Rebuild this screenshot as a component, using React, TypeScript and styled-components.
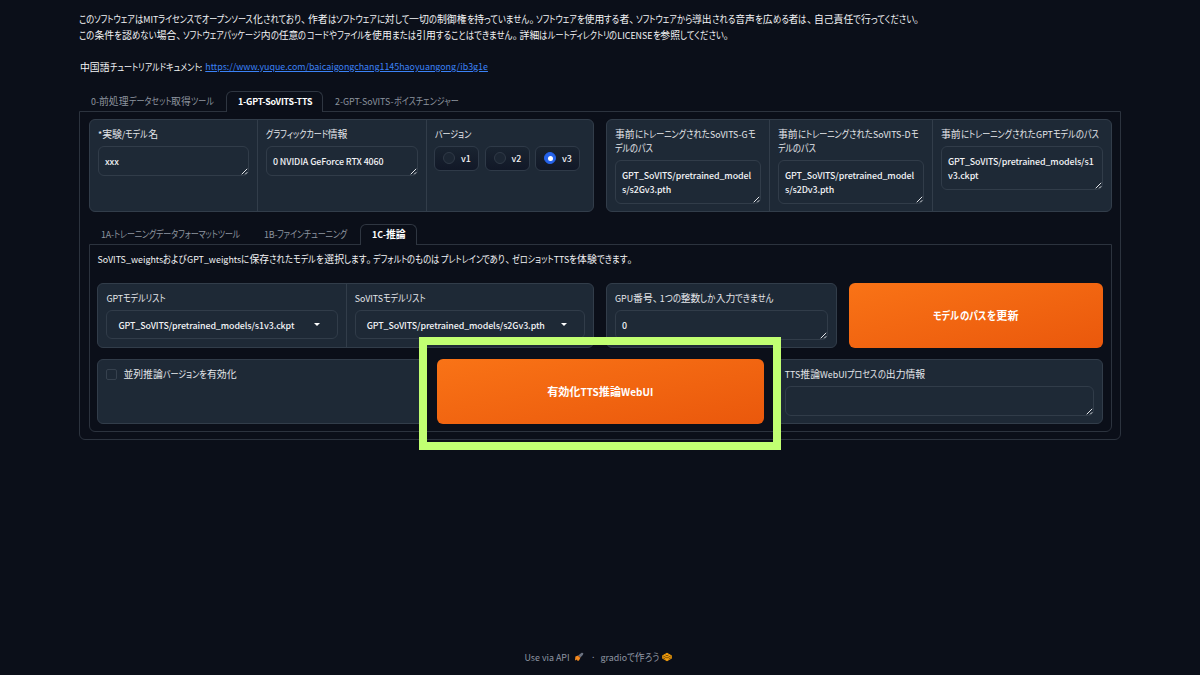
import React from "react";
import styled, { createGlobalStyle, css } from "styled-components";

const GlobalStyle = createGlobalStyle`
  *, *::before, *::after { box-sizing: border-box; }
  html, body { margin: 0; background: #0b0f19; }
  body {
    font-family: "Noto Sans CJK JP", "Liberation Sans", sans-serif;
    font-size: 9.85px;
    color: #f3f4f6;
  }
`;

/* ---------- mixed-script text ---------- */

type Script = "latin" | "hiragana" | "katakana" | "mark" | "kanji";

const KANA_WIDTH = { hiragana: 0.85, katakana: 0.815 };

const condensed = (scale: number) => css<{ $count: number }>`
  display: inline-block;
  font-feature-settings: "palt";
  transform: scaleX(${scale});
  transform-origin: 0 50%;
  margin-right: ${(p) => -(p.$count * (1 - scale) * 0.885).toFixed(3)}em;
`;

const Run = styled.span<{ $script: Script; $count: number }>`
  line-height: 1;
  ${(p) => p.$script === "latin" && "font-size: 0.9em;"}
  ${(p) => p.$script === "mark" && "letter-spacing: -0.3em;"}
  ${(p) => p.$script === "hiragana" && condensed(KANA_WIDTH.hiragana)}
  ${(p) => p.$script === "katakana" && condensed(KANA_WIDTH.katakana)}
`;

const scriptOf = (ch: string): Script => {
  if (/[\u0000-\u00ff]/.test(ch)) return "latin";
  if (/[\u3000-\u303f]/.test(ch)) return "mark";
  if (/[\u3040-\u309f]/.test(ch)) return "hiragana";
  if (/[\u30a0-\u30ff]/.test(ch)) return "katakana";
  return "kanji";
};

const Line = styled.span`
  display: block;
  height: 1lh;
  white-space: pre;
`;

function Runs({ children }: { children: string }) {
  const runs: { script: Script; text: string }[] = [];
  for (const ch of children) {
    const script = scriptOf(ch);
    const last = runs[runs.length - 1];
    if (last && last.script === script) last.text += ch;
    else runs.push({ script, text: ch });
  }
  return (
    <>
      {runs.map((r, i) => (
        <Run key={i} $script={r.script} $count={r.text.length}>
          {r.text}
        </Run>
      ))}
    </>
  );
}

function Text({ children }: { children: string }) {
  return (
    <>
      {children.split("\n").map((l, i) => (
        <Line key={i}>
          <Runs>{l}</Runs>
        </Line>
      ))}
    </>
  );
}

/* ---------- page ---------- */

const Page = styled.main`
  position: relative;
  display: flex;
  flex-direction: column;
  width: 1200px;
  height: 675px;
  padding: 11px 79px 0;
  overflow: hidden;
`;

const Prose = styled.div`
  line-height: 16px;
`;

const Paragraph = styled.p`
  display: flex;
  margin: 16px 0 0 1px;
  gap: 3px;
`;

const DocLink = styled.a`
  font-size: 8.88px;
  color: #3b82f6;
  text-decoration: underline;
`;

const TabBar = styled.div<{ $top: number }>`
  display: flex;
  height: 20px;
  margin-top: ${(p) => p.$top}px;
`;

const Tab = styled.button<{ $width: number; $active?: boolean; $tracking?: number }>`
  width: ${(p) => p.$width}px;
  height: 21px;
  padding: 0 0 2px 11px;
  border: 1px solid transparent;
  border-bottom: 0;
  border-radius: 6px 6px 0 0;
  background: none;
  color: #8d949f;
  font: inherit;
  line-height: 18px;
  letter-spacing: ${(p) => p.$tracking ?? 0}px;
  text-align: left;
  ${(p) =>
    p.$active &&
    css`
      position: relative;
      background: #0b0f19;
      border-color: #2f3641;
      color: #fff;
      font-weight: 700;
    `}
`;

const Panel = styled.section<{ $left: number; $right: number }>`
  border: 1px solid #2c333e;
  border-radius: 0 0 6px 6px;
  padding: 7px ${(p) => p.$right}px 7px ${(p) => p.$left}px;
`;

const Row = styled.div<{ $columns: string; $height: number; $top?: number }>`
  display: grid;
  grid-template-columns: ${(p) => p.$columns};
  column-gap: 12px;
  height: ${(p) => p.$height}px;
  margin-top: ${(p) => p.$top ?? 0}px;
`;

const Group = styled.div<{ $columns?: string }>`
  display: grid;
  grid-template-columns: ${(p) => p.$columns ?? "1fr"};
  border: 1px solid #323d4a;
  border-radius: 6px;
  background: #1e2936;
  overflow: hidden;
`;

const Cell = styled.div`
  min-width: 0;
  padding: 7px 8px 0;
  & + & {
    border-left: 1px solid #323d4a;
  }
`;

const Label = styled.div`
  margin-bottom: 5px;
  line-height: 14px;
  color: #e5e7eb;
`;

const Area = styled.div<{ $lines?: number }>`
  position: relative;
  height: ${(p) => 16 + 14 * (p.$lines ?? 1)}px;
  padding: 6.5px 6px;
  border: 1px solid #313c49;
  border-radius: 6px;
  line-height: 14px;
  font-weight: 500;
  letter-spacing: -0.09px;
`;

const Grip = styled.svg`
  position: absolute;
  right: 0;
  bottom: 0;
  width: 7px;
  height: 7px;
`;

function TextArea({ value = "" }: { value?: string }) {
  return (
    <Area $lines={value.split("\n").length}>
      <Text>{value}</Text>
      <Grip viewBox="0 0 7 7" fill="none" stroke="#e5e7eb" strokeWidth="1">
        <path d="M0.7 6.3 L6.2 0.8 M4.2 6.3 L6.2 4.3" />
      </Grip>
    </Area>
  );
}

function Field({ label, value }: { label: string; value?: string }) {
  return (
    <Cell>
      <Label>
        <Text>{label}</Text>
      </Label>
      <TextArea value={value} />
    </Cell>
  );
}

const Select = styled.div`
  display: flex;
  align-items: center;
  justify-content: space-between;
  height: 29px;
  padding: 0 17px 0 11px;
  border: 1px solid #313c49;
  border-radius: 6px;
  line-height: 14px;
  font-weight: 500;
  letter-spacing: -0.09px;
`;

function Dropdown({ label, value }: { label: string; value: string }) {
  return (
    <Cell>
      <Label>
        <Text>{label}</Text>
      </Label>
      <Select>
        <Text>{value}</Text>
        <svg width="6" height="3" viewBox="0 0 6 3">
          <path d="M0 0h6L3 3z" fill="#fff" />
        </svg>
      </Select>
    </Cell>
  );
}

const RadioList = styled.div`
  display: flex;
  gap: 5.5px;
  margin-left: -1px;
`;

const RadioOption = styled.label`
  display: flex;
  align-items: center;
  gap: 6px;
  width: 45px;
  height: 25px;
  padding: 0 0 1px 8px;
  border: 1px solid #2f3a48;
  border-radius: 6px;
  background: linear-gradient(to bottom, #1a2431, #111827);
  line-height: 14px;
  font-weight: 500;
`;

const RadioDot = styled.span<{ $on: boolean }>`
  display: grid;
  place-items: center;
  width: 12px;
  height: 12px;
  border: 1px solid ${(p) => (p.$on ? "#2563eb" : "#303a47")};
  border-radius: 50%;
  background: ${(p) => (p.$on ? "#2563eb" : "#1c2633")};
  &::after {
    content: "";
    width: 5px;
    height: 5px;
    border-radius: 50%;
    background: ${(p) => (p.$on ? "#fff" : "transparent")};
  }
`;

const CheckRow = styled.label`
  display: flex;
  align-items: center;
  gap: 6px;
  height: 14px;
  line-height: 14px;
  color: #e5e7eb;
`;

const CheckBox = styled.span`
  width: 11px;
  height: 11px;
  border: 1px solid #36414e;
  border-radius: 2px;
  background: #1e2936;
`;

const PrimaryButton = styled.button`
  display: flex;
  align-items: center;
  justify-content: center;
  padding: 0 0 2px;
  border: 0;
  border-radius: 6px;
  background: linear-gradient(to bottom right, #f97316, #ea580c);
  color: #fff;
  font: inherit;
  font-size: 11.1px;
  font-weight: 700;
  line-height: 16px;
`;

const Note = styled.div`
  line-height: 15px;
  letter-spacing: 0.03px;
`;

const Highlight = styled.div`
  position: absolute;
  left: 419px;
  top: 337px;
  width: 362px;
  height: 113px;
  border: 8px solid #c1ff72;
`;

const Footer = styled.footer`
  display: flex;
  align-items: center;
  height: 16px;
  margin: auto 0 10px 445.5px;
  line-height: 16px;
  color: #8f96a3;
`;

const RocketIcon = styled.svg`
  width: 10px;
  height: 10px;
  margin-left: 4px;
`;

const Dot = styled.span`
  margin: 0 4.5px 0 7px;
`;

const LogoIcon = styled.svg`
  width: 10px;
  height: 10px;
  margin-left: 3px;
`;

const versions = ["v1", "v2", "v3"];

export default function App() {
  return (
    <Page>
      <GlobalStyle />
      <Prose>
        <Text>
          {"このソフトウェアはMITライセンスでオープンソース化されており、作者はソフトウェアに対して一切の制御権を持っていません。ソフトウェアを使用する者、ソフトウェアから導出される音声を広める者は、自己責任で行ってください。\nこの条件を認めない場合、ソフトウェアパッケージ内の任意のコードやファイルを使用または引用することはできません。詳細はルートディレクトリのLICENSEを参照してください。"}
        </Text>
        <Paragraph>
          <Text>中国語チュートリアルドキュメント:</Text>
          <DocLink>https://www.yuque.com/baicaigongchang1145haoyuangong/ib3g1e</DocLink>
        </Paragraph>
      </Prose>

      <TabBar $top={16}>
        <Tab $width={147}>
          <Text>0-前処理データセット取得ツール</Text>
        </Tab>
        <Tab $width={97} $active $tracking={-0.22}>
          <Text>1-GPT-SoVITS-TTS</Text>
        </Tab>
        <Tab $width={150}>
          <Text>2-GPT-SoVITS-ボイスチェンジャー</Text>
        </Tab>
      </TabBar>

      <Panel $left={9} $right={8}>
        <Row $columns="505px 1fr" $height={93}>
          <Group $columns="167px 169px 1fr">
            <Field label="*実験/モデル名" value="xxx" />
            <Field label="グラフィックカード情報" value="0 NVIDIA GeForce RTX 4060" />
            <Cell>
              <Label>
                <Text>バージョン</Text>
              </Label>
              <RadioList>
                {versions.map((v) => (
                  <RadioOption key={v}>
                    <RadioDot $on={v === "v3"} />
                    <Text>{v}</Text>
                  </RadioOption>
                ))}
              </RadioList>
            </Cell>
          </Group>
          <Group $columns="162px 163px 1fr">
            <Field
              label={"事前にトレーニングされたSoVITS-Gモ\nデルのパス"}
              value={"GPT_SoVITS/pretrained_model\ns/s2Gv3.pth"}
            />
            <Field
              label={"事前にトレーニングされたSoVITS-Dモ\nデルのパス"}
              value={"GPT_SoVITS/pretrained_model\ns/s2Dv3.pth"}
            />
            <Field
              label="事前にトレーニングされたGPTモデルのパス"
              value={"GPT_SoVITS/pretrained_models/s1\nv3.ckpt"}
            />
          </Group>
        </Row>

        <TabBar $top={12}>
          <Tab $width={163} $tracking={-0.18}>
            <Text>1A-トレーニングデータフォーマットツール</Text>
          </Tab>
          <Tab $width={108} $tracking={-0.15}>
            <Text>1B-ファインチューニング</Text>
          </Tab>
          <Tab $width={57} $active>
            <Text>1C-推論</Text>
          </Tab>
        </TabBar>

        <Panel $left={7.4} $right={8}>
          <Note>
            <Text>
              SoVITS_weightsおよびGPT_weightsに保存されたモデルを選択します。デフォルトのものはプレトレインであり、ゼロショットTTSを体験できます。
            </Text>
          </Note>
          <Row $columns="496.6px 231px 1fr" $height={65} $top={16}>
            <Group $columns="1fr 1fr">
              <Dropdown label="GPTモデルリスト" value="GPT_SoVITS/pretrained_models/s1v3.ckpt" />
              <Dropdown label="SoVITSモデルリスト" value="GPT_SoVITS/pretrained_models/s2Gv3.pth" />
            </Group>
            <Group>
              <Field label="GPU番号、1つの整数しか入力できません" value="0" />
            </Group>
            <PrimaryButton>
              <Text>モデルのパスを更新</Text>
            </PrimaryButton>
          </Row>
          <Row $columns="1fr 1fr 1fr" $height={65} $top={11}>
            <Group>
              <Cell>
                <CheckRow>
                  <CheckBox />
                  <Text>並列推論バージョンを有効化</Text>
                </CheckRow>
              </Cell>
            </Group>
            <PrimaryButton>
              <Text>有効化TTS推論WebUI</Text>
            </PrimaryButton>
            <Group>
              <Field label="TTS推論WebUIプロセスの出力情報" />
            </Group>
          </Row>
        </Panel>
      </Panel>

      <Footer>
        <Text>Use via API</Text>
        <RocketIcon viewBox="0 0 10 10">
          <path d="M4.2 3.6 L7.6 0.8 L9.3 1 L9 2.8 L6.2 5.8 Z" fill="#6b7280" />
          <path d="M1.4 4.6 L4.2 3.4 L6.4 5.7 L5 8.6 L3.6 9 L3 7.6 L1 8.4 Z" fill="#f58a1f" />
          <path d="M4.6 4.2 L6 5.6" stroke="#7c2d12" strokeWidth="0.8" />
        </RocketIcon>
        <Dot>·</Dot>
        <Text>gradioで作ろう</Text>
        <LogoIcon viewBox="0 0 10 10">
          <path d="M5 0.8 L9.8 3.6 V6.4 L5 9.2 L0.2 6.4 V3.6 Z" fill="#f59e0b" />
          <path d="M1.2 4 L5 6 L8.8 4 M1.2 6 L3.4 7.1 M8.8 6 L6.6 7.1 M3.4 3 L5 3.8 L6.6 3" stroke="#5b3a07" strokeWidth="0.8" fill="none" />
        </LogoIcon>
      </Footer>

      <Highlight />
    </Page>
  );
}
